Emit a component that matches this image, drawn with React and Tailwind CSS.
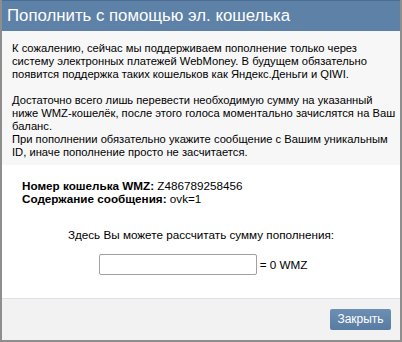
export default function App() {
  return (
    <div className="w-[402px] h-[342px] bg-white font-['Liberation_Sans',Arial,sans-serif] text-[11px] leading-[13px] text-black">
      <div className="flex h-full flex-col border-x-2 border-b-2 border-[#8e8e8e]">
        {/* Header */}
        <div className="flex h-[31px] items-center border-t border-[#4a6d94] bg-[#5e81a8] px-[5px]">
          <h1 className="text-[16.8px] font-normal leading-none text-white">Пополнить с помощью эл. кошелька</h1>
        </div>

        {/* Info */}
        <div className="bg-[#f7f7f7] px-[10px] pt-[11px] pb-[6px] text-[11.2px] whitespace-nowrap">
          <p>
            К сожалению, сейчас мы поддерживаем пополнение только через
            <br />
            систему электронных платежей WebMoney. В будущем обязательно
            <br />
            появится поддержка таких кошельков как Яндекс.Деньги и QIWI.
          </p>
          <p className="mt-[13px]">
            Достаточно всего лишь перевести необходимую сумму на указанный
            <br />
            ниже WMZ-кошелёк, после этого голоса моментально зачислятся на Ваш
            <br />
            баланс.
            <br />
            При пополнении обязательно укажите сообщение с Вашим уникальным
            <br />
            ID, иначе пополнение просто не засчитается.
          </p>
        </div>

        {/* Wallet */}
        <div className="flex flex-1 flex-col bg-white text-[11.7px]">
          <div className="px-[20px] pt-[14px]">
            <div>
              <b>Номер кошелька WMZ:</b> Z486789258456
            </div>
            <div>
              <b>Содержание сообщения:</b> ovk=1
            </div>
          </div>
          <div className="mt-[23px] text-center">Здесь Вы можете рассчитать сумму пополнения:</div>
          <div className="mt-[13px] flex items-center justify-center gap-[3px] pl-[4px]">
            <input
              type="text"
              className="h-[21px] w-[158px] rounded-[2px] border border-[#a0a0a0] bg-white px-1 outline-none"
            />
            <span>= 0 WMZ</span>
          </div>
        </div>

        {/* Footer */}
        <div className="flex h-[42px] items-center justify-end border-t border-[#dae1e8] bg-[#f2f2f2] px-[9px]">
          <button className="h-[21px] w-[61px] rounded-[2px] bg-gradient-to-b from-[#6d8fb3] to-[#577ba2] text-[12px] text-white">
            Закрыть
          </button>
        </div>
      </div>
    </div>
  );
}
